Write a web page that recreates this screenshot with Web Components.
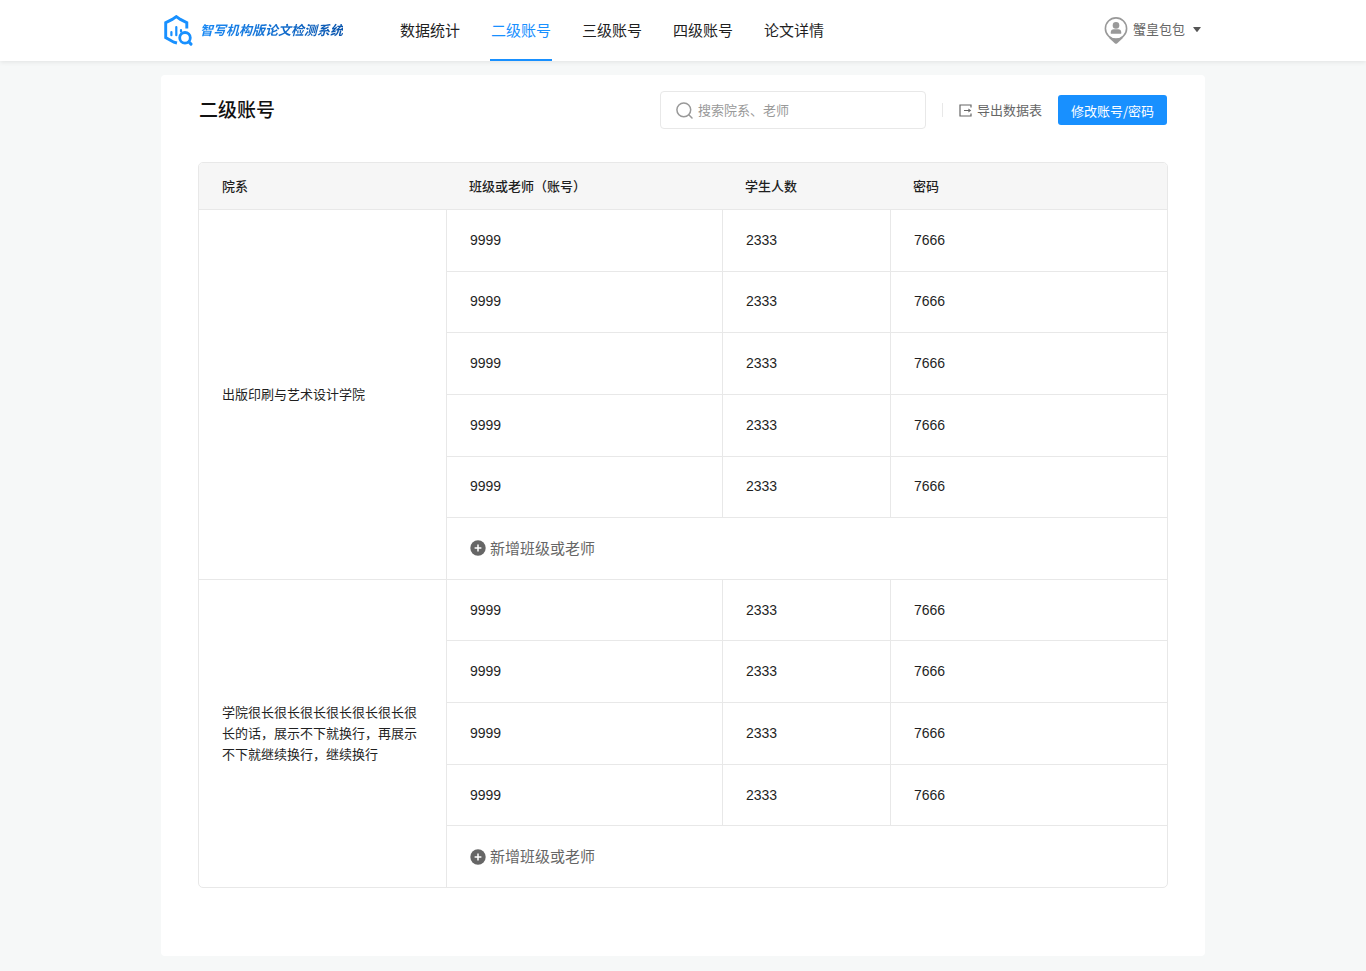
<!DOCTYPE html>
<html lang="zh-CN">
<head>
<meta charset="utf-8">
<meta name="viewport" content="width=device-width, initial-scale=1">
<title>二级账号</title>
<style>
  body {
    --blue: #1890ff;
    --ink: #1f1f1f;
    --muted: #666;
    --line: #e8e8e8;
    --page-width: 1044px;
    margin: 0;
    min-height: 100vh;
    background: #f6f8f8;
    color: var(--ink);
    font: 13px/21px "Liberation Sans", "Noto Sans CJK SC", sans-serif;
  }
</style>
</head>
<body>
<app-header>
  <brand-logo slot="brand">智写机构版论文检测系统</brand-logo>
  <nav-item href="#stats">数据统计</nav-item>
  <nav-item href="#level2" active>二级账号</nav-item>
  <nav-item href="#level3">三级账号</nav-item>
  <nav-item href="#level4">四级账号</nav-item>
  <nav-item href="#papers">论文详情</nav-item>
  <user-menu slot="user">蟹皇包包</user-menu>
</app-header>
<page-card>
  <page-toolbar>
    <span slot="title">二级账号</span>
    <search-box placeholder="搜索院系、老师"></search-box>
    <export-button>导出数据表</export-button>
    <primary-button>修改账号/密码</primary-button>
  </page-toolbar>
  <account-table></account-table>
</page-card>

<script>
  const define = (name, markup, setup) => {
    const template = document.createElement('template');
    template.innerHTML = markup;
    customElements.define(name, class extends HTMLElement {
      connectedCallback() {
        if (this.shadowRoot) return;
        const root = this.attachShadow({ mode: 'open' });
        root.append(template.content.cloneNode(true));
        if (setup) setup(this, root);
      }
    });
  };

  define('app-header', `
    <style>
      :host { display: block; position: relative; background: #fff; box-shadow: 0 1px 5px rgba(0, 0, 0, .09); }
      header { display: flex; align-items: center; box-sizing: border-box; max-width: var(--page-width); height: 61px; margin: 0 auto; padding: 0 3px; }
      nav { display: flex; align-self: stretch; gap: 29px; margin-left: 56px; }
      .user { margin-left: auto; }
    </style>
    <header>
      <slot name="brand"></slot>
      <nav aria-label="主导航"><slot></slot></nav>
      <div class="user"><slot name="user"></slot></div>
    </header>`);

  define('brand-logo', `
    <style>
      :host { display: block; }
      a { display: flex; align-items: center; gap: 7px; text-decoration: none; }
      svg { display: block; flex: none; }
      span { font-size: 13px; font-weight: 700; font-style: italic; white-space: nowrap; color: transparent; background: linear-gradient(90deg, #1989f5, #0a55ad); background-clip: text; -webkit-background-clip: text; }
    </style>
    <a href="#home">
      <svg width="29" height="32" viewBox="0 0 29 32" fill="none" stroke="#1890ff" stroke-width="2.9" aria-hidden="true">
        <path d="M13 28 9.8 27.2 1.7 22.6V7.6L8.2 4.4 12.3 1.6 16.4 4.4 22.8 7.6V13.4"/>
        <path d="M7.4 17V20.2M12.3 12V20.2M17 15V16.6" stroke-width="2.2" stroke-linecap="round"/>
        <circle cx="21" cy="22.8" r="5.3" stroke-width="2.8"/>
        <path d="m24.8 26.8 2.2 2.3" stroke-width="3" stroke-linecap="round"/>
      </svg>
      <span><slot></slot></span>
    </a>`);

  define('nav-item', `
    <style>
      :host { display: flex; }
      a { display: flex; align-items: center; padding: 2px 1px 0; border-bottom: 2px solid transparent; font-size: 15px; white-space: nowrap; color: var(--ink); text-decoration: none; }
      :host([active]) a { color: var(--blue); border-color: var(--blue); }
    </style>
    <a><slot></slot></a>`, (host, root) => {
      const link = root.querySelector('a');
      link.href = host.getAttribute('href');
      if (host.hasAttribute('active')) link.setAttribute('aria-current', 'page');
    });

  define('user-menu', `
    <style>
      :host { display: block; }
      button { display: flex; align-items: center; gap: 5px; padding: 0 1px 2px 0; border: 0; background: none; font: inherit; color: var(--muted); cursor: pointer; }
      svg { display: block; }
      .caret { margin-left: 3px; }
    </style>
    <button type="button" aria-haspopup="menu">
      <svg width="24" height="28" viewBox="0 0 24 28" aria-hidden="true">
        <path fill="#999" d="M4.5 21.5 11 27.4q1 .8 2 0l6.5-5.9z"/>
        <circle cx="12" cy="12.5" r="10.6" fill="#fff" stroke="#999" stroke-width="1.6"/>
        <circle cx="12" cy="9.4" r="3.3" fill="#999"/>
        <path fill="#999" d="M6.8 17.8v-1.6q0-3 3-3h4.4q3 0 3 3v1.6z"/>
      </svg>
      <slot></slot>
      <svg class="caret" width="8" height="5" viewBox="0 0 8 5" aria-hidden="true"><path fill="#555" d="M.5 0h7q.5.2.2.6L4.4 4.7q-.4.4-.8 0L.3.6Q0 .2.5 0z"/></svg>
    </button>`);

  define('page-card', `
    <style>
      :host { display: block; padding: 14px 0 15px; }
      main { box-sizing: border-box; max-width: var(--page-width); margin: 0 auto; padding: 16px 37px 68px; border-radius: 4px; background: #fff; }
    </style>
    <main><slot></slot></main>`);

  define('page-toolbar', `
    <style>
      :host { display: flex; align-items: center; justify-content: space-between; margin-bottom: 33px; padding: 0 1px; }
      h1 { margin: 0; padding-top: 2px; font-size: 19px; font-weight: 500; line-height: 28px; color: #111; }
      div { display: flex; align-items: center; gap: 16px; }
    </style>
    <h1><slot name="title"></slot></h1>
    <div><slot></slot></div>`);

  define('search-box', `
    <style>
      :host { display: block; }
      label { display: flex; align-items: center; gap: 5px; box-sizing: border-box; width: 266px; height: 38px; padding: 0 15px; border: 1px solid var(--line); border-radius: 4px; background: #fff; }
      svg { flex: none; }
      input { flex: 1; min-width: 0; padding: 0; border: 0; outline: 0; background: none; font: inherit; color: inherit; }
      input::placeholder { color: #999; opacity: 1; }
    </style>
    <label>
      <svg width="17" height="17" viewBox="0 0 17 17" fill="none" stroke="#999" stroke-width="1.5" stroke-linecap="round" aria-hidden="true"><circle cx="7.8" cy="7.8" r="6.9"/><path d="m12.8 12.8 3.2 3.2"/></svg>
      <input type="text">
    </label>`, (host, root) => {
      const input = root.querySelector('input');
      input.placeholder = host.getAttribute('placeholder');
      input.setAttribute('aria-label', input.placeholder);
    });

  define('export-button', `
    <style>
      :host { display: flex; align-items: center; gap: 16px; }
      :host::before { content: ""; width: 1px; height: 14px; background: var(--line); }
      button { display: flex; align-items: center; gap: 5px; padding: 0; border: 0; background: none; font: inherit; color: var(--muted); cursor: pointer; }
    </style>
    <button type="button">
      <svg width="13" height="13" viewBox="0 0 13 13" fill="none" stroke="#666" stroke-width="1.2" aria-hidden="true"><path d="M12 3.6V1H1v11h11V9.4M5 6.5h6"/><path d="M9.4 4.5 12.2 6.5 9.4 8.5z" fill="#666" stroke="none"/></svg>
      <slot></slot>
    </button>`);

  define('primary-button', `
    <style>
      :host { display: block; }
      button { display: block; height: 30px; padding: 0 13px; border: 0; border-radius: 3px; background: var(--blue); font: inherit; font-family: "Noto Sans CJK SC", sans-serif; color: #fff; white-space: nowrap; cursor: pointer; }
    </style>
    <button type="button"><slot></slot></button>`);

  define('add-button', `
    <style>
      :host { display: block; }
      button { display: flex; align-items: center; gap: 4px; padding: 0; border: 0; background: none; font: inherit; font-size: 15px; color: var(--muted); cursor: pointer; }
    </style>
    <button type="button">
      <svg width="16" height="16" viewBox="0 0 16 16" aria-hidden="true"><circle cx="8" cy="8" r="7.7" fill="#666"/><path d="M8 4.6v6.8M4.6 8h6.8" stroke="#fff" stroke-width="1.5"/></svg>
      <slot></slot>
    </button>`);

  const departments = [
    { name: '出版印刷与艺术设计学院', rows: 5 },
    { name: '学院很长很长很长很长很长很长很长的话，展示不下就换行，再展示不下就继续换行，继续换行', rows: 4 }
  ];

  define('account-table', `
    <style>
      :host { display: block; border: 1px solid var(--line); border-radius: 5px; overflow: hidden; }
      table { width: 100%; height: 724px; table-layout: fixed; border-collapse: separate; border-spacing: 0; }
      .department { width: 247px; }
      .account { width: 276px; }
      .students { width: 168px; }
      th, td { box-sizing: border-box; padding: 0 23px; text-align: left; vertical-align: middle; }
      thead th { height: 46px; background: #f6f6f6; font-weight: 500; }
      tbody tr { height: 61px; }
      tbody th, td { border-top: 1px solid var(--line); }
      tbody th { font-weight: 400; }
      td { border-left: 1px solid var(--line); font-size: 14px; }
    </style>
    <table>
      <colgroup><col class="department"><col class="account"><col class="students"><col></colgroup>
      <thead><tr><th scope="col">院系</th><th scope="col">班级或老师（账号）</th><th scope="col">学生人数</th><th scope="col">密码</th></tr></thead>
    </table>`, (host, root) => {
      const account = '<td>9999</td><td>2333</td><td>7666</td>';
      const add = '<td colspan="3"><add-button>新增班级或老师</add-button></td>';
      for (const { name, rows } of departments) {
        const body = document.createElement('tbody');
        const heading = `<th scope="rowgroup" rowspan="${rows + 1}">${name}</th>`;
        body.innerHTML = `<tr>${heading}${account}</tr>` + `<tr>${account}</tr>`.repeat(rows - 1) + `<tr>${add}</tr>`;
        root.querySelector('table').append(body);
      }
    });
</script>
</body>
</html>
